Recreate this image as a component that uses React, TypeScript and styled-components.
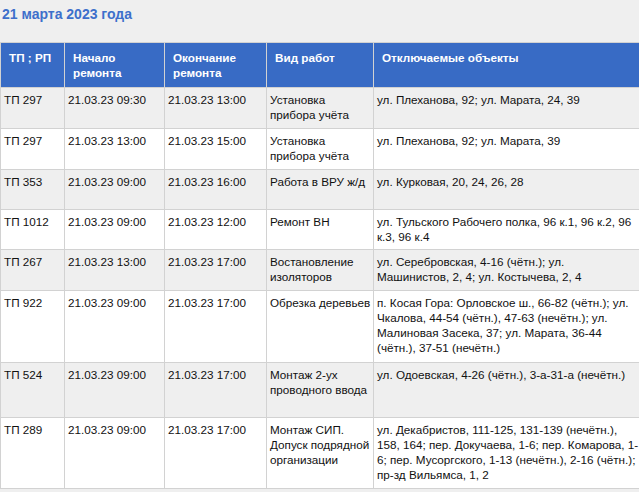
import React from "react";
import styled, { createGlobalStyle } from "styled-components";

const Global = createGlobalStyle`
  html, body { margin: 0; padding: 0; background: #efefef; }
  body { font-family: "Liberation Sans", Arial, sans-serif; overflow: hidden; }
`;

const Page = styled.div`
  width: 639px;
  height: 492px;
  overflow: hidden;
  background: #efefef;
`;

const Title = styled.h2`
  margin: 0;
  padding: 6px 0 0 2px;
  height: 42px;
  box-sizing: border-box;
  font-size: 14px;
  line-height: 17px;
  font-weight: bold;
  color: #3d6fcb;
`;

const Table = styled.table`
  border-collapse: collapse;
  table-layout: fixed;
  width: 641px;
  font-size: 11.7px;
  line-height: 15px;
  color: #111;
`;

const HeadCell = styled.th`
  background: #386bc5;
  color: #fff;
  font-weight: bold;
  text-align: left;
  vertical-align: top;
  padding: 7px 2px 7px 8px;
  height: 30px;
  border: 1px solid #d2d2d2;
`;

const Row = styled.tr<{ $alt: boolean }>`
  background: ${(p) => (p.$alt ? "#efefef" : "#ffffff")};
`;

const Cell = styled.td<{ $h: number }>`
  vertical-align: top;
  text-align: left;
  padding: 4px 0 5px 3px;
  height: ${(p) => p.$h}px;
  border: 1px solid #d2d2d2;
  box-sizing: border-box;
  white-space: pre-line;
`;

type R = { tp: string; s: string; e: string; w: string; o: string; h: number };

const rows: R[] = [
  { tp: "ТП 297", s: "21.03.23 09:30", e: "21.03.23 13:00", w: "Установка прибора учёта", o: "ул. Плеханова, 92; ул. Марата, 24, 39", h: 41 },
  { tp: "ТП 297", s: "21.03.23 13:00", e: "21.03.23 15:00", w: "Установка прибора учёта", o: "ул. Плеханова, 92; ул. Марата, 39", h: 41 },
  { tp: "ТП 353", s: "21.03.23 09:00", e: "21.03.23 16:00", w: "Работа в ВРУ ж/д", o: "ул. Курковая, 20, 24, 26, 28", h: 40 },
  { tp: "ТП 1012", s: "21.03.23 09:00", e: "21.03.23 12:00", w: "Ремонт ВН", o: "ул. Тульского Рабочего полка, 96 к.1, 96 к.2, 96 к.3, 96 к.4", h: 40 },
  { tp: "ТП 267", s: "21.03.23 13:00", e: "21.03.23 17:00", w: "Востановление изоляторов", o: "ул. Серебровская, 4-16 (чётн.); ул.\nМашинистов, 2, 4; ул. Костычева, 2, 4", h: 41 },
  { tp: "ТП 922", s: "21.03.23 09:00", e: "21.03.23 17:00", w: "Обрезка деревьев", o: "п. Косая Гора: Орловское ш., 66-82 (чётн.); ул. Чкалова, 44-54 (чётн.), 47-63 (нечётн.); ул. Малиновая Засека, 37; ул. Марата, 36-44 (чётн.), 37-51 (нечётн.)", h: 72 },
  { tp: "ТП 524", s: "21.03.23 09:00", e: "21.03.23 17:00", w: "Монтаж 2-ух проводного ввода", o: "ул. Одоевская, 4-26 (чётн.), 3-а-31-а (нечётн.)", h: 55 },
  { tp: "ТП 289", s: "21.03.23 09:00", e: "21.03.23 17:00", w: "Монтаж СИП. Допуск подрядной организации", o: "ул. Декабристов, 111-125, 131-139 (нечётн.), 158, 164; пер. Докучаева, 1-6; пер. Комарова, 1-6; пер. Мусоргского, 1-13 (нечётн.), 2-16 (чётн.); пр-зд Вильямса, 1, 2", h: 71 },
];

export default function App() {
  return (
    <Page>
      <Global />
      <Title>21 марта 2023 года</Title>
      <Table>
        <colgroup>
          <col style={{ width: 64 }} />
          <col style={{ width: 100 }} />
          <col style={{ width: 102 }} />
          <col style={{ width: 107 }} />
          <col style={{ width: 268 }} />
        </colgroup>
        <thead>
          <tr>
            <HeadCell>ТП ; РП</HeadCell>
            <HeadCell>Начало ремонта</HeadCell>
            <HeadCell>Окончание ремонта</HeadCell>
            <HeadCell>Вид работ</HeadCell>
            <HeadCell>Отключаемые объекты</HeadCell>
          </tr>
        </thead>
        <tbody>
          {rows.map((r, i) => (
            <Row key={i} $alt={i % 2 === 0}>
              <Cell $h={r.h}>{r.tp}</Cell>
              <Cell $h={r.h}>{r.s}</Cell>
              <Cell $h={r.h}>{r.e}</Cell>
              <Cell $h={r.h}>{r.w}</Cell>
              <Cell $h={r.h}>{r.o}</Cell>
            </Row>
          ))}
        </tbody>
      </Table>
    </Page>
  );
}
